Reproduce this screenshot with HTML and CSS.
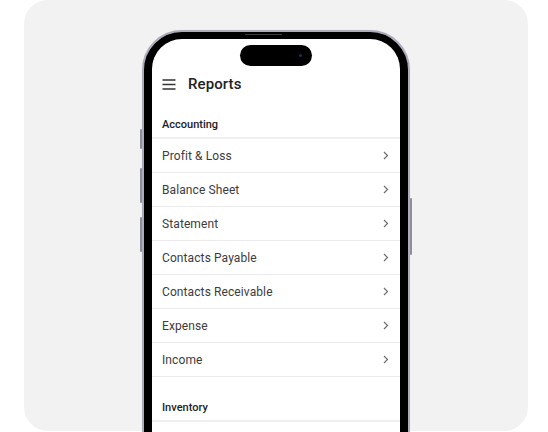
FILE: index.html
```html
<!DOCTYPE html>
<html lang="en">
<head>
<meta charset="utf-8">
<title>Reports</title>
<link rel="stylesheet" href="styles.css">
</head>
<body>
<div class="card">
  <div class="phone">
    <span class="btn btn-mute"></span>
    <span class="btn btn-vol-up"></span>
    <span class="btn btn-vol-down"></span>
    <span class="btn btn-power"></span>
    <span class="speaker"></span>
    <div class="screen">
      <div class="island"><span class="cam"></span></div>
      <header class="appbar">
        <svg class="menu" width="14" height="11" viewBox="0 0 14 11" aria-hidden="true">
          <path d="M0.5 1h13M0.5 5.5h13M0.5 10h13" stroke="#333" stroke-width="1.5" fill="none"/>
        </svg>
        <h1 class="title">Reports</h1>
      </header>

      <section class="section">
        <h2 class="section-title">Accounting</h2>
        <ul class="list">
          <li class="row"><span>Profit &amp; Loss</span><svg class="chev" width="6" height="9" viewBox="0 0 6 9"><path d="M1 1l3.5 3.5L1 8" stroke="#6e6e6e" stroke-width="1.2" fill="none"/></svg></li>
          <li class="row"><span>Balance Sheet</span><svg class="chev" width="6" height="9" viewBox="0 0 6 9"><path d="M1 1l3.5 3.5L1 8" stroke="#6e6e6e" stroke-width="1.2" fill="none"/></svg></li>
          <li class="row"><span>Statement</span><svg class="chev" width="6" height="9" viewBox="0 0 6 9"><path d="M1 1l3.5 3.5L1 8" stroke="#6e6e6e" stroke-width="1.2" fill="none"/></svg></li>
          <li class="row"><span>Contacts Payable</span><svg class="chev" width="6" height="9" viewBox="0 0 6 9"><path d="M1 1l3.5 3.5L1 8" stroke="#6e6e6e" stroke-width="1.2" fill="none"/></svg></li>
          <li class="row"><span>Contacts Receivable</span><svg class="chev" width="6" height="9" viewBox="0 0 6 9"><path d="M1 1l3.5 3.5L1 8" stroke="#6e6e6e" stroke-width="1.2" fill="none"/></svg></li>
          <li class="row"><span>Expense</span><svg class="chev" width="6" height="9" viewBox="0 0 6 9"><path d="M1 1l3.5 3.5L1 8" stroke="#6e6e6e" stroke-width="1.2" fill="none"/></svg></li>
          <li class="row"><span>Income</span><svg class="chev" width="6" height="9" viewBox="0 0 6 9"><path d="M1 1l3.5 3.5L1 8" stroke="#6e6e6e" stroke-width="1.2" fill="none"/></svg></li>
        </ul>
      </section>

      <section class="section section-next">
        <h2 class="section-title">Inventory</h2>
        <ul class="list">
          <li class="row row-empty"></li>
        </ul>
      </section>
    </div>
  </div>
</div>
</body>
</html>
```

FILE: styles.css
```css
* { box-sizing: border-box; }

html, body {
  margin: 0;
  padding: 0;
  width: 548px;
  height: 432px;
  overflow: hidden;
  background: #ffffff;
  font-family: Roboto, "Liberation Sans", Arial, sans-serif;
}

.card {
  margin-left: 24px;
  width: 504px;
  height: 431px;
  border-radius: 24px;
  background: #f2f2f2;
  display: flex;
  justify-content: center;
  padding-top: 30px;
}

.phone {
  position: relative;
  width: 268px;
  height: 560px;
  flex: none;
  border: 2px solid #adacbb;
  border-radius: 40px;
  background: #000;
  padding: 7px 8px 0 8px;
  box-shadow: 0 0 1px #c9c8d4;
}

.btn {
  position: absolute;
  width: 2px;
  background: #8f8e9e;
  border-radius: 1px;
}
.btn-mute { left: -4px; top: 97px; height: 20px; }
.btn-vol-up { left: -4px; top: 136px; height: 35px; }
.btn-vol-down { left: -4px; top: 185px; height: 35px; }
.btn-power { right: -4px; top: 166px; height: 57px; }

.speaker {
  position: absolute;
  top: 2px;
  left: 101px;
  width: 37px;
  height: 1px;
  background: #3a3a3a;
}

.screen {
  height: 100%;
  background: #ffffff;
  border-radius: 30px 30px 0 0;
  padding-top: 6px;
  overflow: hidden;
}

.island {
  position: relative;
  width: 72px;
  height: 21px;
  margin: 0 auto;
  background: #000;
  border-radius: 11px;
}
.cam {
  position: absolute;
  right: 10px;
  top: 9px;
  width: 3px;
  height: 3px;
  border-radius: 50%;
  background: #1c2b5e;
}

.appbar {
  height: 36px;
  display: flex;
  align-items: center;
  padding-left: 10px;
  gap: 12px;
}
.menu { display: block; flex: none; }
.title {
  margin: 0;
  font-size: 15px;
  font-weight: 500;
  color: #222;
  line-height: 18px;
  letter-spacing: 0.1px;
}

.section-title {
  margin: 0;
  padding: 16px 10px 5px;
  font-size: 11px;
  line-height: 14px;
  font-weight: 500;
  color: #222;
}
.section-next { margin-top: 8px; }

.list {
  list-style: none;
  margin: 0;
  padding: 0;
  border-top: 2px solid #efefef;
}

.row {
  height: 34px;
  border-bottom: 1px solid #ebebeb;
  display: flex;
  align-items: center;
  justify-content: space-between;
  padding: 0 11px 0 10px;
  font-size: 12px;
  color: #3c3c3c;
  letter-spacing: 0.1px;
}
.chev { display: block; flex: none; }
```
